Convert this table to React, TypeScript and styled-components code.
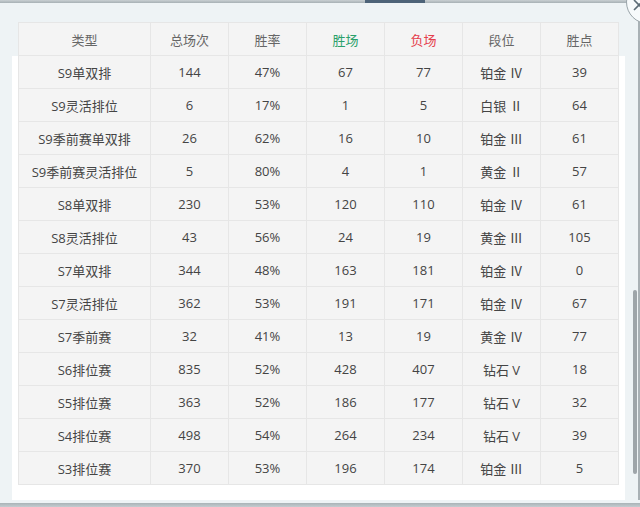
import * as React from 'react'
import styled, { createGlobalStyle } from 'styled-components'

const GlobalStyle = createGlobalStyle`
  html, body {
    margin: 0;
    padding: 0;
    background: #eef3f5;
  }
  body {
    font-family: 'Open Sans', 'Noto Sans CJK SC', sans-serif;
  }
`

const COLS = '132px repeat(6, 78px)'

interface Row {
  type: string
  total: number
  rate: string
  win: number
  lose: number
  tier: string
  points: number
}

const ROWS: Row[] = [
  { type: 'S9单双排', total: 144, rate: '47%', win: 67, lose: 77, tier: '铂金 Ⅳ', points: 39 },
  { type: 'S9灵活排位', total: 6, rate: '17%', win: 1, lose: 5, tier: '白银 Ⅱ', points: 64 },
  { type: 'S9季前赛单双排', total: 26, rate: '62%', win: 16, lose: 10, tier: '铂金 Ⅲ', points: 61 },
  { type: 'S9季前赛灵活排位', total: 5, rate: '80%', win: 4, lose: 1, tier: '黄金 Ⅱ', points: 57 },
  { type: 'S8单双排', total: 230, rate: '53%', win: 120, lose: 110, tier: '铂金 Ⅳ', points: 61 },
  { type: 'S8灵活排位', total: 43, rate: '56%', win: 24, lose: 19, tier: '黄金 Ⅲ', points: 105 },
  { type: 'S7单双排', total: 344, rate: '48%', win: 163, lose: 181, tier: '铂金 Ⅳ', points: 0 },
  { type: 'S7灵活排位', total: 362, rate: '53%', win: 191, lose: 171, tier: '铂金 Ⅳ', points: 67 },
  { type: 'S7季前赛', total: 32, rate: '41%', win: 13, lose: 19, tier: '黄金 Ⅳ', points: 77 },
  { type: 'S6排位赛', total: 835, rate: '52%', win: 428, lose: 407, tier: '钻石 V', points: 18 },
  { type: 'S5排位赛', total: 363, rate: '52%', win: 186, lose: 177, tier: '钻石 V', points: 32 },
  { type: 'S4排位赛', total: 498, rate: '54%', win: 264, lose: 234, tier: '钻石 V', points: 39 },
  { type: 'S3排位赛', total: 370, rate: '53%', win: 196, lose: 174, tier: '铂金 Ⅲ', points: 5 },
]

const Frame = styled.div`
  position: relative;
  width: 640px;
  height: 507px;
  display: flex;
  flex-direction: column;
  overflow: hidden;
  background: #eef3f5;
`

const TopBar = styled.div`
  height: 3px;
  background: linear-gradient(#c9d0d3, #a7b0b4);
  display: flex;
`

const TopTab = styled.div`
  margin-left: 365px;
  width: 60px;
  background: #4d6378;
`

const Body = styled.div`
  flex: 1;
  display: flex;
  min-height: 0;
`

const Content = styled.div`
  flex: 1;
  padding-top: 19px;
  display: flex;
  flex-direction: column;
`

const Grid = styled.div`
  display: grid;
  grid-template-columns: ${COLS};
  width: 600px;
  background: #f4f4f4;
  border-left: 1px solid #e6e6e6;
`

const HeadGrid = styled(Grid)`
  margin-left: 18px;
  border-top: 1px solid #e6e6e6;
`

const Sheet = styled.div`
  margin-left: 12px;
  width: 607px;
  padding: 0 0 15px 6px;
  background: #ffffff;
`

const Cell = styled.div<{ $head?: boolean; $color?: string }>`
  height: 32px;
  display: flex;
  align-items: center;
  justify-content: center;
  border-right: 1px solid #e6e6e6;
  border-bottom: 1px solid #e6e6e6;
  font-size: 13px;
  color: ${(p) => p.$color ?? (p.$head ? '#666666' : '#444444')};
  white-space: nowrap;
`

const Track = styled.div`
  width: 11px;
  display: flex;
  flex-direction: column;
  padding-top: 287px;
  padding-bottom: 26px;
  border-right: 2px solid #a9b1b5;
  box-sizing: border-box;
`

const Thumb = styled.div`
  flex: 1;
  width: 4px;
  margin-left: 4px;
  border-radius: 2px;
  background: #9ea5a9;
`

const BottomBar = styled.div`
  height: 4px;
  margin-top: 3px;
  background: linear-gradient(#aab3b7, #c4ccd0);
`

const Close = styled.div`
  position: absolute;
  top: -20px;
  right: -30px;
  width: 44px;
  height: 44px;
  border-radius: 50%;
  border: 1px solid #9aa4a9;
  background: #f7fafb;
  box-sizing: border-box;
`

const CloseIcon = styled.svg`
  position: absolute;
  left: 6px;
  top: 18px;
`

const HEADERS: { label: string; color?: string }[] = [
  { label: '类型' },
  { label: '总场次' },
  { label: '胜率' },
  { label: '胜场', color: '#2aa06a' },
  { label: '负场', color: '#e5404c' },
  { label: '段位' },
  { label: '胜点' },
]

export default function App(): JSX.Element {
  return (
    <>
      <GlobalStyle />
      <Frame>
        <TopBar>
          <TopTab />
        </TopBar>
        <Body>
          <Content>
            <HeadGrid>
              {HEADERS.map((h) => (
                <Cell key={h.label} $head $color={h.color}>
                  {h.label}
                </Cell>
              ))}
            </HeadGrid>
            <Sheet>
              <Grid>
                {ROWS.map((r) => (
                  <React.Fragment key={r.type}>
                    <Cell>{r.type}</Cell>
                    <Cell>{r.total}</Cell>
                    <Cell>{r.rate}</Cell>
                    <Cell>{r.win}</Cell>
                    <Cell>{r.lose}</Cell>
                    <Cell>{r.tier}</Cell>
                    <Cell>{r.points}</Cell>
                  </React.Fragment>
                ))}
              </Grid>
            </Sheet>
          </Content>
          <Track>
            <Thumb />
          </Track>
        </Body>
        <BottomBar />
        <Close>
          <CloseIcon width="12" height="12" viewBox="0 0 12 12">
            <path d="M1 1 L11 11 M11 1 L1 11" stroke="#5b6b75" strokeWidth="1.6" fill="none" />
          </CloseIcon>
        </Close>
      </Frame>
    </>
  )
}
